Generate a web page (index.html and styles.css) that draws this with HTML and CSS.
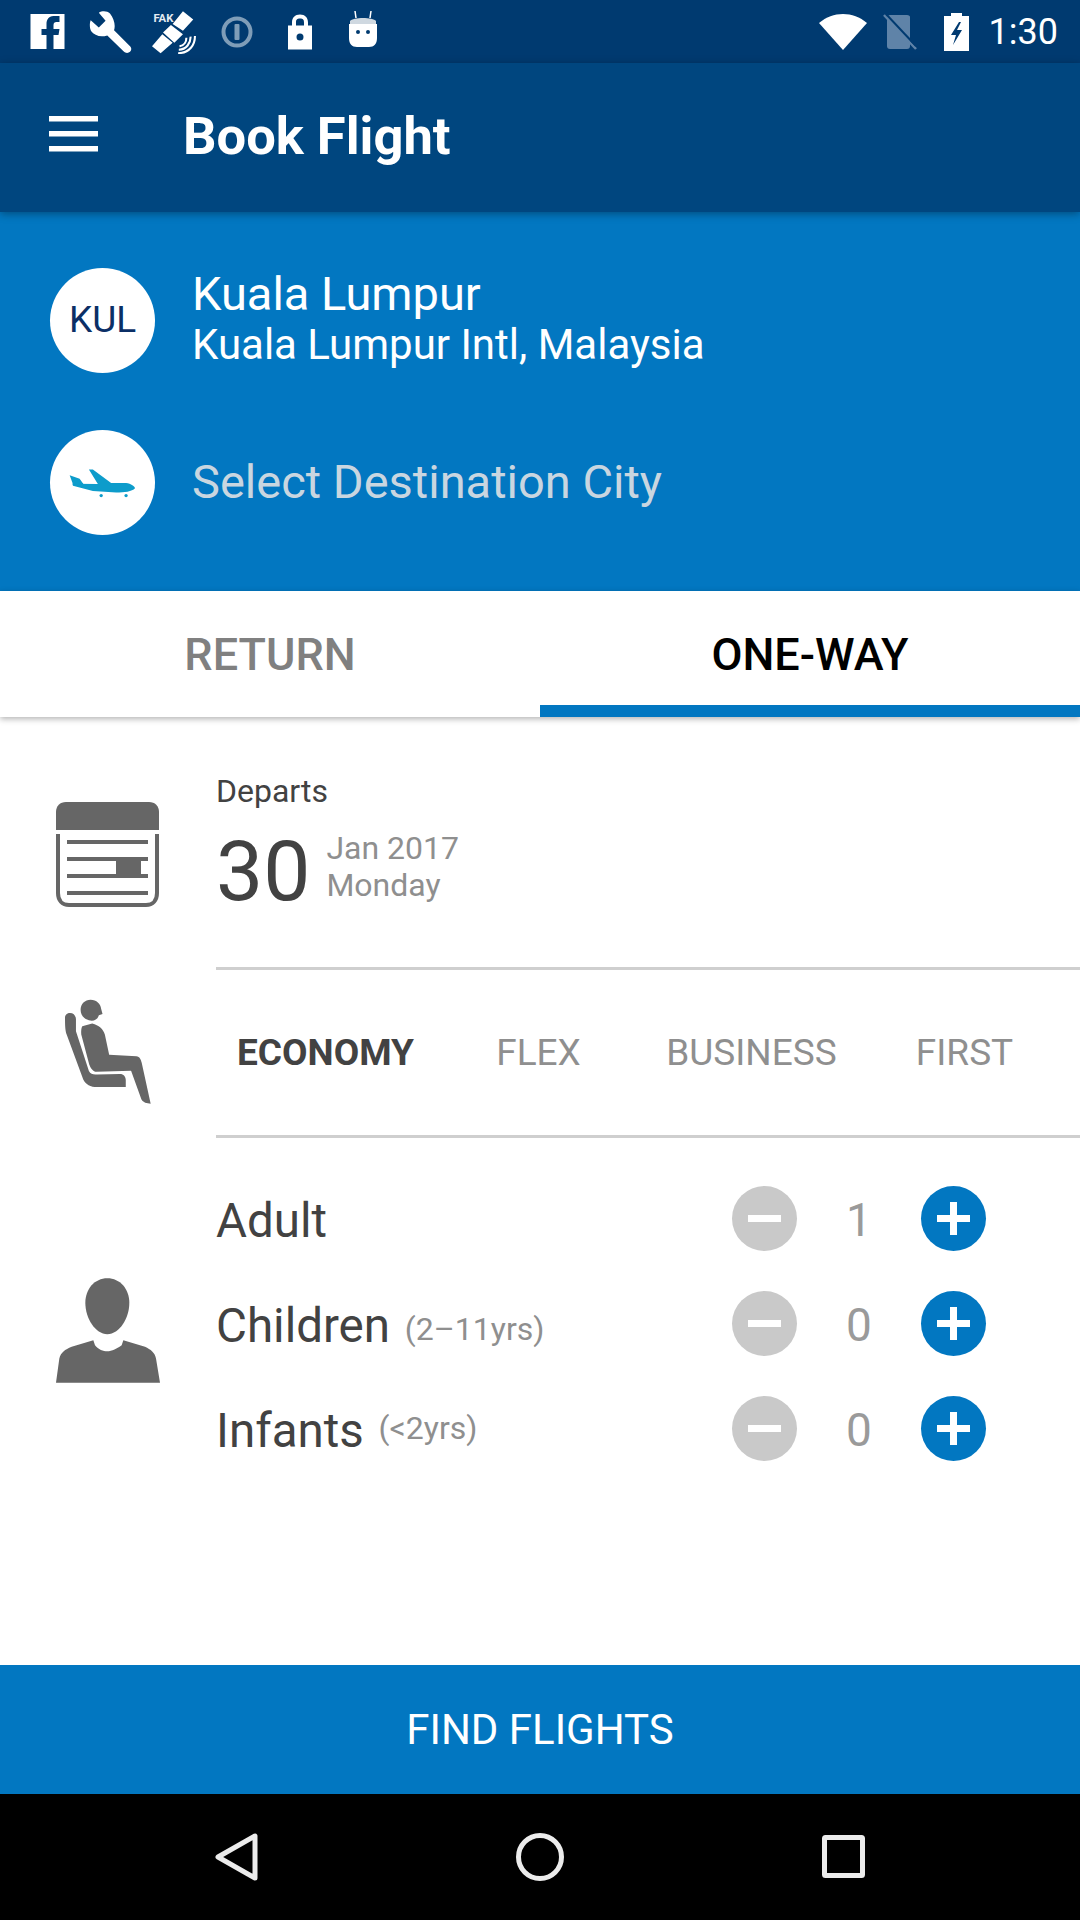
FILE: index.html
```html
<!DOCTYPE html>
<html lang="en">
<head>
    <meta charset="UTF-8">
    <meta name="viewport" content="width=device-width, initial-scale=1.0">
    <title>Book Flight</title>
    <link rel="stylesheet" href="styles.css">
</head>
<body>
    <div class="status-bar">
        <div class="status-left">
            <span class="slot">
                <svg width="35" height="35" viewBox="0 0 34 35"><path fill="#fff" d="M0 0H34V35H23V21H28L29 15H23V11C23 9 24 8 26 8H29V2C27 2 25 2 23 2C18 2 16 6 16 10V15H11V21H16V35H0Z"/></svg>
            </span>
            <span class="slot">
                <svg width="44" height="44" viewBox="256 30 130 130"><path fill="#fff" d="M285 38C295 32 310 33 318 40C330 55 335 75 330 90L378 138C388 150 370 165 358 152L310 105C290 112 272 105 262 92C257 82 258 68 261 60L285 82L305 62Z"/></svg>
            </span>
            <span class="slot">
                <svg width="44" height="45" viewBox="440 32 128 130">
                    <path fill="#fff" d="M530 38L560 62L530 95L500 75ZM495 78L530 105L505 130L472 100ZM470 105L500 130L465 160L440 140Z"/>
                    <text x="444" y="68" class="fake-text">FAK</text>
                    <path fill="none" stroke="#fff" stroke-width="6" d="M520 140C535 138 540 125 540 115M518 150C540 150 553 130 552 112M516 160C550 160 565 135 565 110"/>
                </svg>
            </span>
            <span class="slot">
                <svg width="32" height="32" viewBox="0 0 32 32"><circle cx="16" cy="16" r="13.500" fill="none" stroke="#7f9db8" stroke-width="4"/><rect x="13.500" y="8" width="5" height="16" rx="1" fill="#7f9db8"/></svg>
            </span>
            <span class="slot">
                <svg width="26" height="37" viewBox="0 0 26 36"><path fill="#fff" fill-rule="evenodd" d="M5 12V9C5 4 8 1 13 1C18 1 21 4 21 9V12H25V36H1V12ZM9 12H17V9C17 6 16 5 13 5C10 5 9 6 9 9ZM13 20A3.500 3.500 0 1 0 13 27A3.500 3.500 0 1 0 13 20Z"/></svg>
            </span>
            <span class="slot">
                <svg class="android" width="30" height="38" viewBox="0 0 30 36">
                    <path fill="#fff" stroke="#fff" stroke-width="1.500" d="M7 0L8 7M23 0L22 7"/>
                    <path fill="#cfd8e0" d="M2 10C5 6 25 6 28 10V13H2Z"/>
                    <path fill="#fff" fill-rule="evenodd" d="M1 13H29V27C29 33 26 36 21 36H9C4 36 1 33 1 27ZM10 19A2 2 0 1 0 10 23A2 2 0 1 0 10 19ZM20 19A2 2 0 1 0 20 23A2 2 0 1 0 20 19Z"/>
                </svg>
            </span>
        </div>
        <div class="status-right">
            <svg width="48" height="36" viewBox="0 0 48 36"><path fill="#fff" d="M0 9C14 -3 34 -3 48 9L24 36Z"/></svg>
            <svg class="sim" width="34" height="36" viewBox="0 0 34 36">
                <path fill="#5f83a8" d="M7 1H24C26 1 27 2 27 3V32C27 34 26 35 24 35H7C5 35 4 34 4 32V3C4 2 5 1 7 1Z"/>
                <path stroke="#5f83a8" stroke-width="2.500" d="M1 1L33 35"/>
                <path stroke="#003a70" stroke-width="2" d="M3 0L33 32"/>
            </svg>
            <svg class="battery" width="25" height="38" viewBox="0 0 25 38"><path fill="#fff" fill-rule="evenodd" d="M7 0H18V3H25V38H0V3H7ZM15 9L7 22H12L9 32L18 17H13L17 9Z"/></svg>
            <span class="time">1:30</span>
        </div>
    </div>

    <header class="app-bar">
        <svg class="menu-icon" width="49" height="36" viewBox="0 0 49 36"><path fill="#fff" d="M0 0H49V5.500H0ZM0 15H49V20.500H0ZM0 30H49V35.500H0Z"/></svg>
        <h1 class="app-title">Book Flight</h1>
    </header>

    <section class="route">
        <div class="route-row">
            <div class="badge badge-code">KUL</div>
            <div class="city">
                <div class="city-name">Kuala Lumpur</div>
                <div class="city-airport">Kuala Lumpur Intl, Malaysia</div>
            </div>
        </div>
        <div class="route-row">
            <div class="badge">
                <svg width="67" height="30" viewBox="118 653 202 90">
                    <path fill="#0d9ccb" d="M120 675L150 685L162 702L130 702ZM178 657H190L245 698L290 698C305 700 317 708 317 714C308 724 285 727 260 727L190 722L130 706L128 700L205 701Z"/>
                    <circle cx="215" cy="736" r="5" fill="#0d9ccb"/>
                    <circle cx="290" cy="736" r="5" fill="#0d9ccb"/>
                </svg>
            </div>
            <div class="city-placeholder">Select Destination City</div>
        </div>
    </section>

    <nav class="tabs">
        <div class="tab">RETURN</div>
        <div class="tab tab-active">ONE-WAY</div>
    </nav>

    <main class="content">
        <div class="row row-date">
            <div class="row-icon icon-date">
                <svg width="103" height="105" viewBox="0 0 103 105">
                    <path fill="#666" d="M10 0H93C99 0 103 4 103 10V28H0V10C0 4 4 0 10 0Z"/>
                    <path fill="none" stroke="#666" stroke-width="4" d="M2 32V91C2 98 6 103 13 103H90C97 103 101 98 101 91V32"/>
                    <path fill="#666" d="M11 38H92V42H11ZM11 55H92V59H11ZM11 72H92V76H11ZM11 89H92V93H11ZM60 59H85V72H60Z"/>
                </svg>
            </div>
            <div class="row-body date-body">
                <div class="date-label">Departs</div>
                <div class="date-value">
                    <span class="date-day">30</span>
                    <div class="date-text">
                        <div>Jan 2017</div>
                        <div>Monday</div>
                    </div>
                </div>
            </div>
        </div>

        <div class="row row-class">
            <div class="row-icon icon-class">
                <svg width="88" height="108" viewBox="100 685 265 325">
                    <path fill="#666" d="M180 690C198 690 210 702 212 718L216 733L205 737C200 752 188 755 175 752C160 748 150 735 150 720C150 703 163 690 180 690Z"/>
                    <path fill="#666" d="M155 770L185 762C205 768 218 778 223 795L236 856L318 860C328 861 332 870 334 880L361 1003C350 1003 338 1000 333 990L302 904L198 907C188 907 180 896 176 885L152 795C151 785 152 775 155 770Z"/>
                    <path fill="#666" d="M103 745C103 735 110 730 118 730C128 730 135 737 136 748L136 785L175 905C180 915 190 916 200 915L268 914C280 914 286 922 286 932V953H200C180 953 165 945 158 930L108 795C104 785 103 770 103 745Z"/>
                </svg>
            </div>
            <div class="row-body class-list">
                <div class="class-item class-active">ECONOMY</div>
                <div class="class-item">FLEX</div>
                <div class="class-item">BUSINESS</div>
                <div class="class-item">FIRST</div>
            </div>
        </div>

        <div class="row row-pax">
            <div class="row-icon icon-pax">
                <svg width="104" height="105" viewBox="78 324 312 314">
                    <path fill="#666" d="M232 324C270 324 298 356 298 398C298 445 268 492 232 492C196 492 166 445 166 398C166 356 194 324 232 324Z"/>
                    <path fill="#666" d="M78 638L88 565C92 548 105 538 125 530L190 510L195 525C205 538 220 543 232 543C245 543 262 535 275 525L280 510L345 530C362 538 375 548 378 565L390 638Z"/>
                </svg>
            </div>
            <div class="pax-list">
                <div class="pax-row">
                    <div class="pax-label">Adult</div>
                    <div class="stepper">
                        <span class="step step-minus"></span>
                        <span class="step-count">1</span>
                        <span class="step step-plus"></span>
                    </div>
                </div>
                <div class="pax-row">
                    <div class="pax-label">Children <span class="pax-age">(2–11yrs)</span></div>
                    <div class="stepper">
                        <span class="step step-minus"></span>
                        <span class="step-count">0</span>
                        <span class="step step-plus"></span>
                    </div>
                </div>
                <div class="pax-row">
                    <div class="pax-label">Infants <span class="pax-age pax-age-raised">(&lt;2yrs)</span></div>
                    <div class="stepper">
                        <span class="step step-minus"></span>
                        <span class="step-count">0</span>
                        <span class="step step-plus"></span>
                    </div>
                </div>
            </div>
        </div>
    </main>

    <button class="find-btn">FIND FLIGHTS</button>

    <div class="nav-bar">
        <svg width="44" height="48" viewBox="0 0 44 48"><path fill="none" stroke="#ececec" stroke-width="5" stroke-linejoin="round" d="M40 3V45L3 24Z"/></svg>
        <svg width="48" height="48" viewBox="0 0 48 48"><circle cx="24" cy="24" r="21.500" fill="none" stroke="#ececec" stroke-width="5"/></svg>
        <svg width="43" height="43" viewBox="0 0 43 43"><rect x="2.500" y="2.500" width="38" height="38" rx="1" fill="none" stroke="#ececec" stroke-width="5"/></svg>
    </div>
</body>
</html>
```
FILE: styles.css
```css
html, body {
    margin: 0;
    padding: 0;
}
body {
    width: 1080px;
    height: 1920px;
    display: flex;
    flex-direction: column;
    overflow: hidden;
    background-color: #fff;
    font-family: Roboto, "Liberation Sans", sans-serif;
    color: #424242;
}

/* status bar */
.status-bar {
    height: 63px;
    flex: none;
    display: flex;
    justify-content: space-between;
    align-items: center;
    background-color: #003a70;
}
.status-left {
    display: flex;
    align-items: center;
    padding-left: 16px;
}
.slot {
    width: 63px;
    display: flex;
    justify-content: center;
}
.android {
    margin-bottom: 5px;
}
.fake-text {
    font-family: Roboto, sans-serif;
    font-size: 33px;
    font-weight: 700;
    fill: #e4ebf2;
}
.status-right {
    display: flex;
    align-items: center;
    padding-right: 22px;
}
.sim {
    margin-left: 16px;
}
.battery {
    margin-left: 27px;
}
.time {
    margin-left: 20px;
    font-size: 36px;
    color: #fff;
}

/* app bar */
.app-bar {
    height: 149px;
    flex: none;
    position: relative;
    z-index: 2;
    display: flex;
    align-items: center;
    background-color: #00467f;
    box-shadow: 0 2px 8px rgba(0, 0, 0, 0.35);
}
.menu-icon {
    margin-left: 49px;
    margin-top: -7px;
}
.app-title {
    margin: -4px 0 0 85px;
    font-size: 52.500px;
    font-weight: 700;
    color: #fff;
}

/* route */
.route {
    height: 379px;
    flex: none;
    box-sizing: border-box;
    padding: 56px 0 0 50px;
    display: flex;
    flex-direction: column;
    gap: 57px;
    background-color: #0277c1;
}
.route-row {
    display: flex;
    align-items: center;
    gap: 37px;
}
.badge {
    width: 105px;
    height: 105px;
    flex: none;
    border-radius: 50%;
    background-color: #fff;
    display: flex;
    justify-content: center;
    align-items: center;
}
.badge-code {
    font-size: 37px;
    color: #0b2f66;
    padding-bottom: 2px;
    box-sizing: border-box;
}
.city {
    margin-top: -3px;
    color: #fff;
}
.city-name {
    font-size: 47px;
    line-height: 51px;
}
.city-airport {
    font-size: 42px;
    line-height: 51px;
}
.city-placeholder {
    margin-top: -2px;
    font-size: 47px;
    color: #c9d6e0;
}

/* tabs */
.tabs {
    height: 126px;
    flex: none;
    position: relative;
    z-index: 1;
    display: flex;
    background-color: #fff;
    box-shadow: 0 2px 6px rgba(0, 0, 0, 0.3);
}
.tab {
    flex: 1;
    box-sizing: border-box;
    display: flex;
    justify-content: center;
    align-items: center;
    font-size: 45px;
    font-weight: 500;
    color: #808080;
}
.tab-active {
    color: #000;
    border-bottom: 12px solid #0277c1;
    padding-top: 12px;
}

/* content rows */
.content {
    flex: 1;
}
.row {
    display: flex;
}
.row-icon {
    width: 216px;
    flex: none;
    box-sizing: border-box;
    padding-left: 56px;
}
.row-body {
    flex: 1;
    border-bottom: 3px solid #cfcfcf;
}
.row-date {
    height: 253px;
}
.icon-date {
    padding-top: 85px;
}
.date-body {
    padding-top: 56px;
    box-sizing: border-box;
}
.date-label {
    font-size: 32px;
    line-height: 36px;
}
.date-value {
    display: flex;
    align-items: flex-start;
    gap: 16px;
}
.date-day {
    margin-top: 13px;
    font-size: 84px;
    line-height: 100px;
}
.date-text {
    padding-top: 21px;
    font-size: 32px;
    line-height: 37px;
    color: #8f8f8f;
}
.row-class {
    height: 168px;
}
.icon-class {
    padding-left: 64px;
    padding-top: 28px;
}
.class-list {
    display: grid;
    grid-template-columns: repeat(4, 213px);
    align-items: center;
    padding-left: 3px;
    box-sizing: border-box;
}
.class-item {
    text-align: center;
    font-size: 37px;
    color: #8f8f8f;
}
.class-active {
    font-weight: 700;
    color: #424242;
}
.row-pax {
    padding-top: 28px;
}
.icon-pax {
    padding-top: 112px;
}
.pax-list {
    flex: 1;
}
.pax-row {
    height: 105px;
    display: flex;
    justify-content: space-between;
    align-items: center;
}
.pax-label {
    padding-top: 4px;
    font-size: 47.500px;
}
.pax-age {
    margin-left: 3px;
    font-size: 32px;
    vertical-align: 2px;
    color: #8f8f8f;
}
.pax-age-raised {
    vertical-align: 8px;
}
.stepper {
    display: flex;
    align-items: center;
    margin-right: 94px;
}
.step {
    width: 65px;
    height: 65px;
    border-radius: 50%;
    position: relative;
}
.step::before,
.step::after {
    content: "";
    position: absolute;
    background-color: #fff;
}
.step::before {
    left: 16px;
    top: 29px;
    width: 33px;
    height: 7px;
}
.step-minus {
    background-color: #c9c9c9;
}
.step-minus::after {
    display: none;
}
.step-plus {
    background-color: #0277c1;
}
.step-plus::after {
    left: 29px;
    top: 16px;
    width: 7px;
    height: 33px;
}
.step-count {
    width: 124px;
    padding-top: 2px;
    text-align: center;
    font-size: 46px;
    color: #9a9a9a;
}

/* bottom */
.find-btn {
    height: 129px;
    flex: none;
    border: none;
    padding: 0;
    background-color: #0277c1;
    color: #fff;
    font-family: Roboto, "Liberation Sans", sans-serif;
    font-size: 42px;
}
.nav-bar {
    height: 126px;
    flex: none;
    position: relative;
    background-color: #000;
}
.nav-bar svg {
    position: absolute;
    top: 39px;
}
.nav-bar svg:nth-child(1) {
    left: 215px;
}
.nav-bar svg:nth-child(2) {
    left: 516px;
}
.nav-bar svg:nth-child(3) {
    left: 822px;
    top: 41px;
}
```
